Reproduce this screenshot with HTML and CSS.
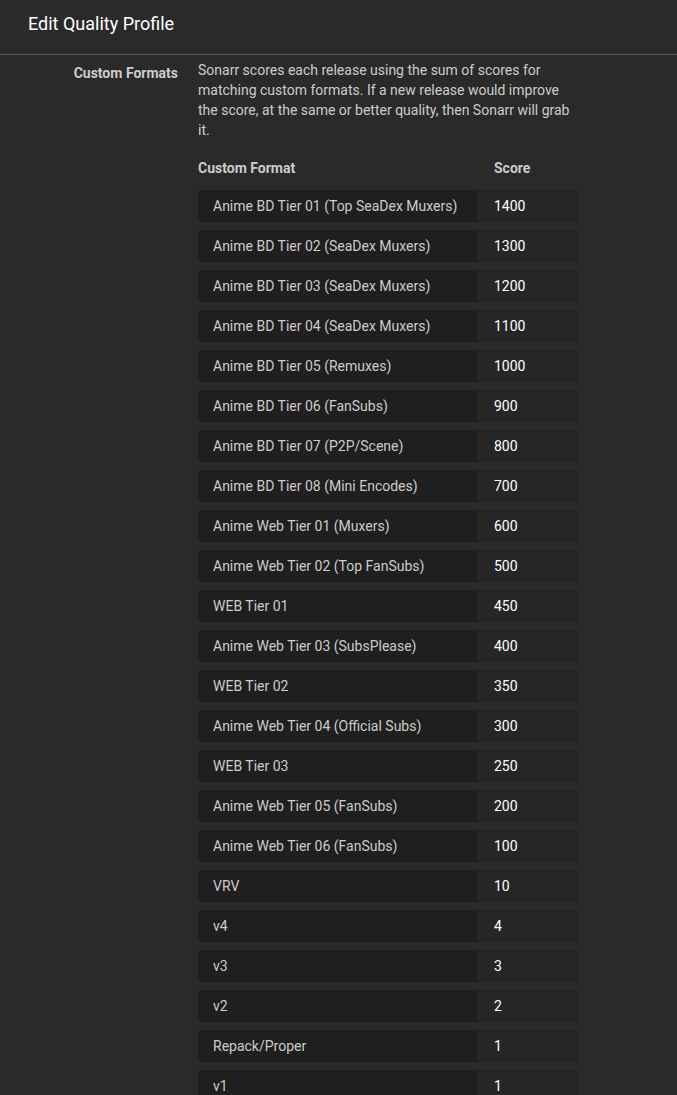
FILE: index.html
```html
<!DOCTYPE html>
<html>
<head>
<meta charset="utf-8">
<link rel="stylesheet" href="styles.css">
</head>
<body>
<div class="modal">
  <div class="header">Edit Quality Profile</div>
  <div class="body">
    <div class="group">
      <div class="label">Custom Formats</div>
      <div class="content">
        <div class="help">Sonarr scores each release using the sum of scores for matching custom formats. If a new release would improve the score, at the same or better quality, then Sonarr will grab it.</div>
        <div class="table-head">
          <div class="th-name">Custom Format</div>
          <div class="th-score">Score</div>
        </div>
        <div class="rows">
          <div class="row"><div class="name">Anime BD Tier 01 (Top SeaDex Muxers)</div><div class="score">1400</div></div>
          <div class="row"><div class="name">Anime BD Tier 02 (SeaDex Muxers)</div><div class="score">1300</div></div>
          <div class="row"><div class="name">Anime BD Tier 03 (SeaDex Muxers)</div><div class="score">1200</div></div>
          <div class="row"><div class="name">Anime BD Tier 04 (SeaDex Muxers)</div><div class="score">1100</div></div>
          <div class="row"><div class="name">Anime BD Tier 05 (Remuxes)</div><div class="score">1000</div></div>
          <div class="row"><div class="name">Anime BD Tier 06 (FanSubs)</div><div class="score">900</div></div>
          <div class="row"><div class="name">Anime BD Tier 07 (P2P/Scene)</div><div class="score">800</div></div>
          <div class="row"><div class="name">Anime BD Tier 08 (Mini Encodes)</div><div class="score">700</div></div>
          <div class="row"><div class="name">Anime Web Tier 01 (Muxers)</div><div class="score">600</div></div>
          <div class="row"><div class="name">Anime Web Tier 02 (Top FanSubs)</div><div class="score">500</div></div>
          <div class="row"><div class="name">WEB Tier 01</div><div class="score">450</div></div>
          <div class="row"><div class="name">Anime Web Tier 03 (SubsPlease)</div><div class="score">400</div></div>
          <div class="row"><div class="name">WEB Tier 02</div><div class="score">350</div></div>
          <div class="row"><div class="name">Anime Web Tier 04 (Official Subs)</div><div class="score">300</div></div>
          <div class="row"><div class="name">WEB Tier 03</div><div class="score">250</div></div>
          <div class="row"><div class="name">Anime Web Tier 05 (FanSubs)</div><div class="score">200</div></div>
          <div class="row"><div class="name">Anime Web Tier 06 (FanSubs)</div><div class="score">100</div></div>
          <div class="row"><div class="name">VRV</div><div class="score">10</div></div>
          <div class="row"><div class="name">v4</div><div class="score">4</div></div>
          <div class="row"><div class="name">v3</div><div class="score">3</div></div>
          <div class="row"><div class="name">v2</div><div class="score">2</div></div>
          <div class="row"><div class="name">Repack/Proper</div><div class="score">1</div></div>
          <div class="row"><div class="name">v1</div><div class="score">1</div></div>
        </div>
      </div>
    </div>
  </div>
</div>
</body>
</html>
```
FILE: styles.css
```css
* {
  box-sizing: border-box;
}
html, body {
  margin: 0;
  padding: 0;
  background: #2a2a2a;
  font-family: Roboto, "Open Sans", sans-serif;
  color: #ccc;
  height: 1095px;
  overflow: hidden;
}
.header {
  height: 55px;
  border-bottom: 1px solid #595959;
  padding-left: 28px;
  font-size: 18px;
  line-height: 48px;
  color: #fff;
}
.body {
  padding-top: 5px;
}
.group {
  display: flex;
}
.label {
  width: 178px;
  flex: none;
  text-align: right;
  font-size: 14px;
  font-weight: bold;
  line-height: 20px;
  padding-top: 3px;
  color: #ccc;
}
.content {
  margin-left: 20px;
  width: 380px;
}
.help {
  font-size: 14px;
  line-height: 20px;
  color: #ccc;
}
.table-head {
  display: flex;
  font-size: 14px;
  font-weight: bold;
  line-height: 20px;
  margin-top: 18px;
  margin-bottom: 12px;
  color: #ccc;
}
.th-name {
  width: 296px;
}
.rows {
  display: flex;
  flex-direction: column;
  gap: 8px;
}
.row {
  display: flex;
  height: 32px;
  border-radius: 4px;
  overflow: hidden;
  background: #262626;
  box-shadow: inset 0 0 0 1px #232323;
  font-size: 14px;
  line-height: 32px;
}
.name {
  width: 279px;
  flex: none;
  padding-left: 15px;
  background: #1f1f1f;
  color: #ccc;
}
.score {
  flex: 1;
  padding-left: 17px;
  color: #fff;
}
```
